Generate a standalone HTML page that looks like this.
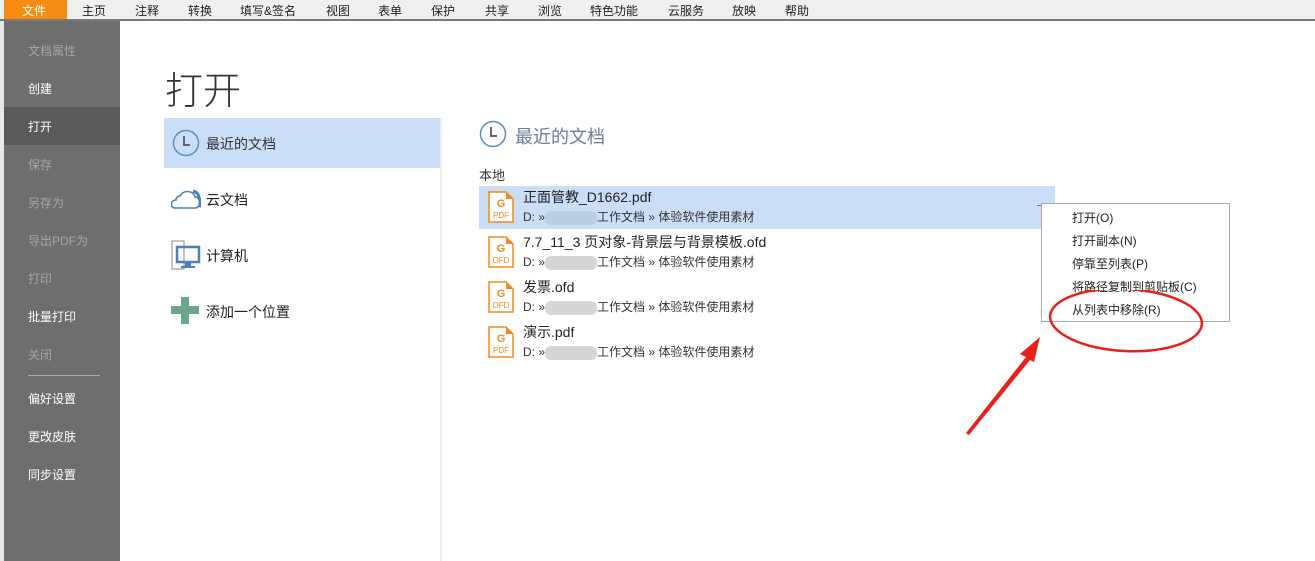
<!DOCTYPE html>
<html><head><meta charset="utf-8"><style>
*{margin:0;padding:0;box-sizing:border-box}
body{width:1315px;height:561px;overflow:hidden;background:#fff;font-family:"Liberation Sans","Noto Sans CJK SC",sans-serif;position:relative;color:#333}
.a{position:absolute;white-space:nowrap}
#top{left:0;top:0;width:1315px;height:21px;background:#f0f0f0;border-bottom:2px solid #7a7a7a}
#top span{position:absolute;top:2px;font-size:12px;color:#222}
#side{left:4px;top:21px;width:116px;height:540px;background:#6e6e6e}
#side div{position:absolute;left:24px;font-size:12px;color:#fff}
#side .d{color:#a6a6a6}
.n{font-size:14px;color:#222}
.p{font-size:12px;color:#333}
.cm{font-size:12px;color:#222}
</style></head><body>
<div class="a" style="left:0;top:21px;width:4px;height:540px;background:#e8e8e8"></div>
<div class="a" id="top">
<div class="a" style="left:4px;top:0;width:63px;height:19px;background:#f68c12"></div>
<span style="left:22px;color:#fff">文件</span><span style="left:82px">主页</span><span style="left:135px">注释</span><span style="left:188px">转换</span><span style="left:240px">填写&amp;签名</span><span style="left:326px">视图</span><span style="left:378px">表单</span><span style="left:431px">保护</span><span style="left:485px">共享</span><span style="left:538px">浏览</span><span style="left:590px">特色功能</span><span style="left:668px">云服务</span><span style="left:732px">放映</span><span style="left:785px">帮助</span>
</div>
<div class="a" id="side">
<div class="d" style="top:21px">文档属性</div>
<div style="top:59px">创建</div>
<div style="left:0;top:86px;width:116px;height:38px;background:#5a5a5a"></div>
<div style="top:97px">打开</div>
<div class="d" style="top:135px">保存</div>
<div class="d" style="top:173px">另存为</div>
<div class="d" style="top:211px">导出PDF为</div>
<div class="d" style="top:249px">打印</div>
<div style="top:287px">批量打印</div>
<div class="d" style="top:325px">关闭</div>
<div style="top:354px;width:72px;height:1px;background:#aaa"></div>
<div style="top:369px">偏好设置</div>
<div style="top:407px">更改皮肤</div>
<div style="top:445px">同步设置</div>
</div>
<div class="a" style="left:165px;top:60px;font-size:38px;color:#333;font-weight:300">打开</div>
<div class="a" style="left:164px;top:118px;width:276px;height:50px;background:#cadff7"></div>
<div class="a" style="left:440px;top:118px;width:2px;height:443px;background:#eee"></div>
<svg class="a" style="left:172px;top:129px" width="28" height="28"><circle cx="14" cy="14" r="12.5" fill="none" stroke="#5b8fc9" stroke-width="1.5"/><path d="M12 7v9h6" fill="none" stroke="#666" stroke-width="2"/></svg>
<div class="a n" style="left:206px;top:134px;color:#333">最近的文档</div>
<svg class="a" style="left:171px;top:188px" width="30" height="22"><path d="M9 8c4-7 14-5 15 1c6 0 6 11 0 11H4c-5 0-5-8 1-8c0-3 2-4 4-4z" fill="none" stroke="#4b7fb8" stroke-width="1.5"/><path d="M22 3c4 1 6 4 6 7c2 2 2 6 0 9" fill="none" stroke="#4b7fb8" stroke-width="3"/></svg>
<div class="a n" style="left:206px;top:190px">云文档</div>
<svg class="a" style="left:171px;top:240px" width="30" height="30"><rect x="1" y="1" width="12" height="28" fill="none" stroke="#888"/><rect x="6" y="7" width="22" height="15" fill="none" stroke="#4b7fb8" stroke-width="2.5"/><rect x="14" y="23" width="6" height="3" fill="#4b7fb8"/><rect x="10" y="26" width="14" height="2" fill="#4b7fb8"/></svg>
<div class="a n" style="left:206px;top:246px">计算机</div>
<svg class="a" style="left:171px;top:297px" width="28" height="28"><rect x="10" y="0" width="8" height="27" fill="#6aa58d"/><rect x="0" y="9" width="28" height="8" fill="#6aa58d"/></svg>
<div class="a n" style="left:206px;top:302px">添加一个位置</div>
<svg class="a" style="left:479px;top:120px" width="28" height="28"><circle cx="14" cy="14" r="12.5" fill="none" stroke="#5b8fc9" stroke-width="1.5"/><path d="M12 7v9h6" fill="none" stroke="#666" stroke-width="2"/></svg>
<div class="a" style="left:515px;top:123px;font-size:18px;color:#6b7c99">最近的文档</div>
<div class="a" style="left:479px;top:165px;font-size:13px;color:#333">本地</div>
<div class="a" style="left:479px;top:186px;width:576px;height:43px;background:#cadff7"></div>
<div class="a" style="left:1037px;top:205px;width:6px;height:1px;background:#777"></div>
<svg class="a" style="left:488px;top:191px" width="26" height="32"><path d="M1 1h17l7 7v23H1z" fill="#fff" stroke="#f08a1c" stroke-width="1.5"/><path d="M18 1v7h7" fill="#f08a1c"/><text x="13" y="16" font-size="11" font-weight="bold" fill="#f08a1c" text-anchor="middle" font-family="Liberation Sans">G</text><text x="13" y="27" font-size="8" fill="#f08a1c" text-anchor="middle" font-family="Liberation Sans">PDF</text></svg>
<div class="a n" style="left:523px;top:187px">正面管教_D1662.pdf</div>
<div class="a p" style="left:523px;top:208px">D: »<span style="display:inline-block;width:52px;height:14px;background:#b8c6da;vertical-align:middle;border-radius:6px;opacity:.7"></span>工作文档 » 体验软件使用素材</div>
<svg class="a" style="left:488px;top:236px" width="26" height="32"><path d="M1 1h17l7 7v23H1z" fill="#fff" stroke="#f08a1c" stroke-width="1.5"/><path d="M18 1v7h7" fill="#f08a1c"/><text x="13" y="16" font-size="11" font-weight="bold" fill="#f08a1c" text-anchor="middle" font-family="Liberation Sans">G</text><text x="13" y="27" font-size="8" fill="#f08a1c" text-anchor="middle" font-family="Liberation Sans">OFD</text></svg>
<div class="a n" style="left:523px;top:232px">7.7_11_3 页对象-背景层与背景模板.ofd</div>
<div class="a p" style="left:523px;top:253px">D: »<span style="display:inline-block;width:52px;height:14px;background:#ccc;vertical-align:middle;border-radius:6px;opacity:.8"></span>工作文档 » 体验软件使用素材</div>
<svg class="a" style="left:488px;top:281px" width="26" height="32"><path d="M1 1h17l7 7v23H1z" fill="#fff" stroke="#f08a1c" stroke-width="1.5"/><path d="M18 1v7h7" fill="#f08a1c"/><text x="13" y="16" font-size="11" font-weight="bold" fill="#f08a1c" text-anchor="middle" font-family="Liberation Sans">G</text><text x="13" y="27" font-size="8" fill="#f08a1c" text-anchor="middle" font-family="Liberation Sans">OFD</text></svg>
<div class="a n" style="left:523px;top:277px">发票.ofd</div>
<div class="a p" style="left:523px;top:298px">D: »<span style="display:inline-block;width:52px;height:14px;background:#ccc;vertical-align:middle;border-radius:6px;opacity:.8"></span>工作文档 » 体验软件使用素材</div>
<svg class="a" style="left:488px;top:326px" width="26" height="32"><path d="M1 1h17l7 7v23H1z" fill="#fff" stroke="#f08a1c" stroke-width="1.5"/><path d="M18 1v7h7" fill="#f08a1c"/><text x="13" y="16" font-size="11" font-weight="bold" fill="#f08a1c" text-anchor="middle" font-family="Liberation Sans">G</text><text x="13" y="27" font-size="8" fill="#f08a1c" text-anchor="middle" font-family="Liberation Sans">PDF</text></svg>
<div class="a n" style="left:523px;top:322px">演示.pdf</div>
<div class="a p" style="left:523px;top:343px">D: »<span style="display:inline-block;width:52px;height:14px;background:#ccc;vertical-align:middle;border-radius:6px;opacity:.8"></span>工作文档 » 体验软件使用素材</div>
<div class="a" style="left:1041px;top:203px;width:189px;height:119px;background:#fff;border:1px solid #aaa"></div>
<div class="a cm" style="left:1072px;top:209px">打开(O)</div>
<div class="a cm" style="left:1072px;top:232px">打开副本(N)</div>
<div class="a cm" style="left:1072px;top:255px">停靠至列表(P)</div>
<div class="a cm" style="left:1072px;top:278px">将路径复制到剪贴板(C)</div>
<div class="a cm" style="left:1072px;top:301px">从列表中移除(R)</div>
<svg class="a" style="left:960px;top:290px" width="260" height="150"><ellipse cx="166" cy="30" rx="76" ry="31" fill="none" stroke="#e8201a" stroke-width="2.5" transform="rotate(3 166 30)"/><path d="M6 143L66 67L60 64L80 47L74 72L70 70L9 145z" fill="#e8201a"/></svg>
</body></html>
